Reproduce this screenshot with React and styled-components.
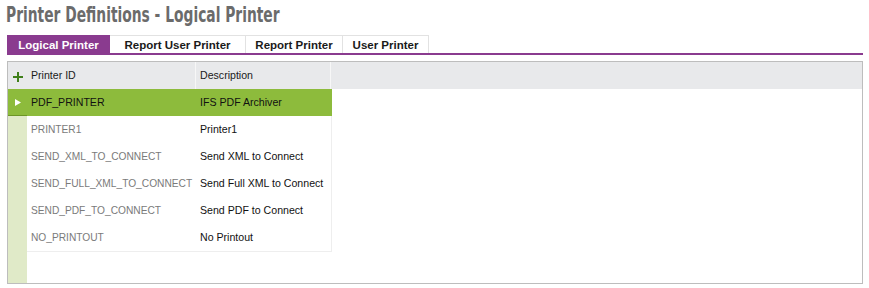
import styled, { createGlobalStyle } from "styled-components";

const GlobalStyle = createGlobalStyle`
  body {
    margin: 0;
    background: #ffffff;
    font-family: "Liberation Sans", Arial, sans-serif;
  }
`;

const tabs = [
  { label: "Logical Printer", width: 103 },
  { label: "Report User Printer", width: 136 },
  { label: "Report Printer", width: 97 },
  { label: "User Printer", width: 86 },
];

const rows = [
  { id: "PDF_PRINTER", description: "IFS PDF Archiver" },
  { id: "PRINTER1", description: "Printer1" },
  { id: "SEND_XML_TO_CONNECT", description: "Send XML to Connect" },
  { id: "SEND_FULL_XML_TO_CONNECT", description: "Send Full XML to Connect" },
  { id: "SEND_PDF_TO_CONNECT", description: "Send PDF to Connect" },
  { id: "NO_PRINTOUT", description: "No Printout" },
];

const App = () => {
  return (
    <Page>
      <GlobalStyle />
      <Title>Printer Definitions - Logical Printer</Title>
      <TabBar>
        {tabs.map((tab, i) => (
          <Tab key={tab.label} $active={i === 0} $w={tab.width}>
            {tab.label}
          </Tab>
        ))}
      </TabBar>
      <Grid>
        <Gutter>
          <GutterHead>
            <svg width="10" height="10" viewBox="0 0 10 10">
              <path d="M4 0h2v4h4v2H6v4H4V6H0V4h4z" fill="#3f7f1a" />
            </svg>
          </GutterHead>
          <GutterCell $selected>
            <svg width="6" height="7" viewBox="0 0 6 7">
              <path d="M0 0L6 3.5L0 7z" fill="#ffffff" />
            </svg>
          </GutterCell>
        </Gutter>
        <Body>
          <HeadRow>
            <HeadCell $w={169}>Printer ID</HeadCell>
            <HeadCell $w={135}>Description</HeadCell>
          </HeadRow>
          {rows.map((row, i) => (
            <Row key={row.id} $selected={i === 0}>
              <Cell $w={169} $muted={i !== 0}>
                {row.id}
              </Cell>
              <Cell $w={135}>{row.description}</Cell>
            </Row>
          ))}
        </Body>
      </Grid>
    </Page>
  );
};

export default App;

const Page = styled.div`
  width: 869px;
  height: 288px;
  padding: 0 6px 0 7px;
  box-sizing: border-box;
`;

const Title = styled.h1`
  margin: 0 0 0 -1px;
  padding: 3px 0 0 0;
  height: 35px;
  box-sizing: border-box;
  font-family: "DejaVu Sans Condensed", "DejaVu Sans", sans-serif;
  font-weight: bold;
  font-size: 21.5px;
  line-height: 24px;
  color: #6b6b6b;
  white-space: nowrap;
  transform: scaleX(0.715);
  transform-origin: left center;
`;

const TabBar = styled.div`
  display: flex;
  height: 18px;
  border-bottom: 2px solid #8a3b8f;
`;

const Tab = styled.div`
  display: flex;
  align-items: center;
  justify-content: center;
  width: ${(p) => p.$w}px;
  font-size: 11.5px;
  font-weight: bold;
  color: ${(p) => (p.$active ? "#ffffff" : "#1a1a1a")};
  background: ${(p) => (p.$active ? "#8a3b8f" : "#ffffff")};
  border: 1px solid ${(p) => (p.$active ? "#8a3b8f" : "#e2e2e2")};
  border-bottom: none;
  border-left: ${(p) => (p.$active ? "1px solid #8a3b8f" : "none")};
  box-sizing: border-box;
`;

const Grid = styled.div`
  display: flex;
  margin-top: 6px;
  height: 223px;
  border: 1px solid #bdbdbd;
  box-sizing: border-box;
  background: #ffffff;
`;

const Gutter = styled.div`
  width: 19px;
  background: #e0eac8;
  display: flex;
  flex-direction: column;
`;

const GutterHead = styled.div`
  height: 27px;
  background: #e8e9eb;
  display: flex;
  align-items: center;
  justify-content: center;
  padding-top: 2px;
  box-sizing: border-box;
`;

const GutterCell = styled.div`
  height: 27px;
  display: flex;
  align-items: center;
  justify-content: center;
  background: ${(p) => (p.$selected ? "#8dbb3c" : "transparent")};
  border-bottom: 1px solid ${(p) => (p.$selected ? "#6c9526" : "transparent")};
  box-sizing: border-box;
`;

const Body = styled.div`
  flex: 1;
  display: flex;
  flex-direction: column;
`;

const HeadRow = styled.div`
  display: flex;
  height: 27px;
  background: #e8e9eb;
`;

const HeadCell = styled.div`
  width: ${(p) => p.$w}px;
  display: flex;
  align-items: center;
  padding: 0 0 1px 4px;
  box-sizing: border-box;
  font-size: 10.6px;
  color: #1a1a1a;
  border-right: 1px solid #f7f7f7;
`;

const Row = styled.div`
  display: flex;
  height: 27px;
  width: 304px;
  background: ${(p) => (p.$selected ? "#8dbb3c" : "#ffffff")};
  border-bottom: 1px solid ${(p) => (p.$selected ? "#6c9526" : "#eeeeee")};
  border-right: 1px solid ${(p) => (p.$selected ? "#8dbb3c" : "#eeeeee")};
  box-sizing: content-box;
  margin-top: -1px;
  &:nth-child(2) {
    margin-top: 0;
  }
`;

const Cell = styled.div`
  width: ${(p) => p.$w}px;
  display: flex;
  align-items: center;
  padding: 0 0 1px 4px;
  box-sizing: border-box;
  font-size: ${(p) => (p.$muted ? "10.2px" : "10.6px")};
  color: ${(p) => (p.$muted ? "#7a7a7a" : "#111111")};
  white-space: nowrap;
`;
